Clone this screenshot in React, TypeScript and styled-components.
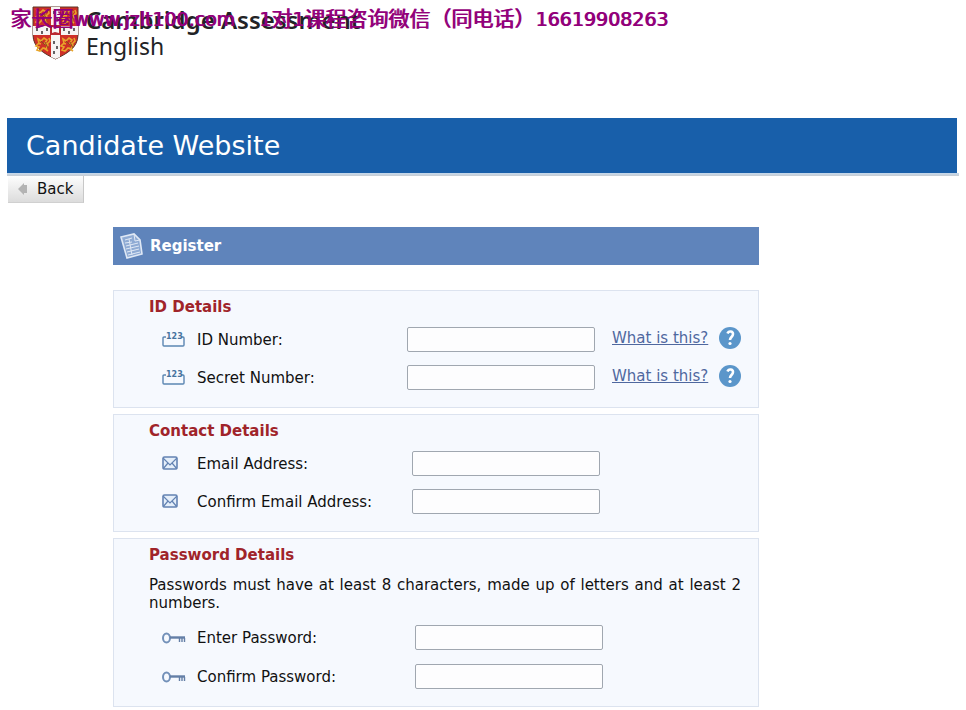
import React, { useId } from "react";
import styled, { createGlobalStyle } from "styled-components";

const GlobalStyle = createGlobalStyle`
  * { box-sizing: border-box; }
  body {
    margin: 0;
    background: #fff;
    color: #111;
    font: 15px/18px "DejaVu Sans", Verdana, sans-serif;
  }
`;

const Page = styled.div`
  padding: 0 7px 3px 7px;
`;

const Masthead = styled.header`
  position: relative;
  display: flex;
  align-items: flex-start;
  gap: 7px;
  height: 118px;
  padding: 6px 0 0 25px;
`;

const Brand = styled.div`
  color: #222326;
  font-family: "Noto Sans", "Open Sans", sans-serif;
  font-size: 23px;
  line-height: 27px;
`;

const BrandName = styled.div`
  font-size: 24px;
  font-weight: 600;
`;

const Watermark = styled.p`
  position: absolute;
  top: 6px;
  left: 3px;
  margin: 0;
  color: #92007a;
  font: 19px/22px "DejaVu Sans", sans-serif;
  text-shadow: 1px 0 #92007a;
  white-space: pre;
`;

const Chinese = styled.span`
  font: 400 21px/22px "Noto Sans CJK SC", sans-serif;
`;

const Banner = styled.h1`
  margin: 0 2px 0 0;
  padding: 0 19px;
  background: #185faa;
  color: #fff;
  font-size: 27px;
  font-weight: 400;
  line-height: 55px;
`;

const Rule = styled.div`
  height: 3px;
  background: linear-gradient(#c5d9ed, #c8cdd3);
`;

const BackButton = styled.button`
  display: flex;
  align-items: center;
  gap: 10px;
  height: 27px;
  margin-left: 1px;
  padding: 0 10px;
  border: 0;
  border-right: 1px solid #c8c8c8;
  border-bottom: 1px solid #d0d0d0;
  background: linear-gradient(#fdfdfd, #dcdcdc);
  color: #111;
  font: inherit;
`;

const Main = styled.main`
  max-width: 646px;
  margin: 24px 106px 0;
`;

const TitleBar = styled.h2`
  display: flex;
  align-items: center;
  gap: 7px;
  height: 38px;
  margin: 0 0 25px;
  padding: 0 7px;
  background: #5f84bb;
  color: #fff;
  font-size: 15px;
`;

const Form = styled.form`
  display: flex;
  flex-direction: column;
  gap: 6px;
`;

const Panel = styled.section`
  padding: 7px 17px 17px 35px;
  border: 1px solid #dce3ef;
  background: #f6f9fe;
`;

const Heading = styled.h3`
  margin: 0 0 11px;
  color: #a0242a;
  font-size: 15px;
`;

const Note = styled.p`
  margin: 12px 0 13px;
  text-align: justify;
`;

const Rows = styled.div<{ $gap?: number }>`
  display: grid;
  gap: ${(p) => p.$gap ?? 13}px;
`;

const Row = styled.div<{ $label: number }>`
  display: grid;
  grid-template-columns: 35px ${(p) => p.$label}px 188px auto;
  align-items: center;
  height: 25px;
  padding-left: 13px;
`;

const TextBox = styled.input`
  width: 100%;
  height: 25px;
  padding: 0 4px;
  border: 1px solid #a0a7b0;
  border-radius: 2px;
  background: #fdfdfe;
  font: inherit;
`;

const Help = styled.div`
  display: flex;
  align-items: center;
  justify-content: space-between;
  padding: 0 0 3px 17px;
`;

const HelpLink = styled.a`
  color: #4f689f;
`;

const HelpButton = styled.button`
  display: block;
  width: 22px;
  height: 22px;
  padding: 0;
  border: 0;
  background: none;
`;

const Lion = ({ x, y }: { x: number; y: number }) => (
  <g transform={`translate(${x} ${y})`} fill="none" stroke="#e8a52b" strokeWidth="1.6">
    <path d="M2 2l3 2 3-3 3 2-2 3 3 2-2 4-3-1-3 3-3-1 2-3-3-1 3-3zM11 7l3-3-1-3M8 11l4 3M2 6l3 1" />
    <path d="M5 4l4 4M9 5l3 6" stroke="#86501c" strokeWidth="1" />
  </g>
);

const Shield = () => (
  <svg width="47" height="54" viewBox="0 0 47 54" aria-hidden="true">
    <path d="M1 1h45v28c0 13-12 19-22.500 24C13 48 1 42 1 29z" fill="#cf2f27" stroke="#5d3526" />
    <path d="M19 1h9v19h18v9H28v22l-4.500 2-4.500-2V29H1v-9h18z" fill="#f7f4f3" />
    <path d="M5 22v3M10 25v3M15 22v3M32 22v3M37 25v3M42 22v3M22 5v3M25 11v3M22 35v3M25 40v3M22 45v3" stroke="#292326" strokeWidth="1.4" />
    <path d="M18 19h11v10H18z" fill="#ba2730" />
    <path d="M20 21l3 1 4-1v6l-4-1-3 1z" fill="#f7f4f3" />
    <Lion x={3} y={3} />
    <Lion x={30} y={3} />
    <Lion x={4} y={31} />
    <Lion x={29} y={31} />
  </svg>
);

const Arrow = () => (
  <svg width="9" height="12" viewBox="0 0 9 12" aria-hidden="true">
    <path d="M0 6l6-6v2h3v8H6v2z" fill="#b3b3b3" />
  </svg>
);

const Document = () => (
  <svg width="23" height="26" viewBox="0 0 23 26" aria-hidden="true">
    <path d="M1 4L14 1l6 6 2 14-15 4z" fill="#8fabd4" stroke="#dfe8f5" strokeWidth="1.6" />
    <path d="M14 1l1 7 5-1M5 7l7-2M5 10l7-1M6 13l12-3M6 16l13-3M7 19l12-3M8 22l12-3M9 6l3 16" fill="none" stroke="#dfe8f5" />
  </svg>
);

const NumberIcon = () => (
  <svg width="23" height="16" viewBox="0 0 23 16" aria-hidden="true">
    <path d="M4 5H2q-1 0-1 1v7q0 1 1 1h19q1 0 1-1V6q0-1-1-1h-2" fill="none" stroke="#5b86b2" strokeWidth="1.4" />
    <text x="4" y="7" fill="#46749f" fontFamily="DejaVu Sans" fontSize="8" fontWeight="700">123</text>
  </svg>
);

const MailIcon = () => (
  <svg width="16" height="15" viewBox="0 0 16 15" aria-hidden="true">
    <rect x="1" y="1" width="14" height="12" rx="1.500" fill="#e5effa" stroke="#6383b3" strokeWidth="1.6" />
    <path d="M1 2l7 7 7-7M1 13l5-6M15 13l-5-6" fill="none" stroke="#6383b3" strokeWidth="1.200" />
  </svg>
);

const KeyIcon = () => (
  <svg width="24" height="12" viewBox="0 0 24 12" aria-hidden="true">
    <ellipse cx="4.500" cy="6" rx="3.500" ry="4.500" fill="none" stroke="#7391b9" strokeWidth="2" />
    <path d="M8 5.500h15" stroke="#647fa6" strokeWidth="2.400" />
    <path d="M17.500 6v4M20 6v4M22.500 6v4" stroke="#647fa6" strokeWidth="1.400" />
  </svg>
);

const HelpIcon = () => (
  <svg width="22" height="22" viewBox="0 0 22 22" aria-hidden="true">
    <circle cx="11" cy="11" r="11" fill="#5b96ca" />
    <path d="M8.500 6.500c1-3 5.500-2.500 5.500.5 0 3-3 3-3 6" fill="none" stroke="#fff" strokeWidth="2.600" />
    <circle cx="11" cy="16.500" r="1.600" fill="#fff" />
  </svg>
);

type FieldProps = {
  icon: React.ReactNode;
  label: string;
  labelWidth: number;
  type?: string;
  help?: boolean;
};

const Field = ({ icon, label, labelWidth, type = "text", help }: FieldProps) => {
  const id = useId();
  return (
    <Row $label={labelWidth}>
      {icon}
      <label htmlFor={id}>{label}</label>
      <TextBox id={id} type={type} />
      {help && (
        <Help>
          <HelpLink href="#help">What is this?</HelpLink>
          <HelpButton type="button" aria-label={`Help: ${label}`}>
            <HelpIcon />
          </HelpButton>
        </Help>
      )}
    </Row>
  );
};

export default function App() {
  return (
    <>
      <GlobalStyle />
      <Page>
        <Masthead>
          <Shield />
          <Brand>
            <BrandName>Cambridge Assessment</BrandName>
            English
          </Brand>
          <Watermark>
            <Chinese>家长圈</Chinese>
            {"www.jzlt100.com    1"}
            <Chinese>对</Chinese>1<Chinese>课程咨询微信（同电话）</Chinese>
            16619908263
          </Watermark>
        </Masthead>
        <Banner>Candidate Website</Banner>
        <Rule />
        <BackButton type="button">
          <Arrow />
          Back
        </BackButton>
        <Main>
          <TitleBar>
            <Document />
            Register
          </TitleBar>
          <Form>
            <Panel>
              <Heading>ID Details</Heading>
              <Rows>
                <Field icon={<NumberIcon />} label="ID Number:" labelWidth={210} help />
                <Field icon={<NumberIcon />} label="Secret Number:" labelWidth={210} help />
              </Rows>
            </Panel>
            <Panel>
              <Heading>Contact Details</Heading>
              <Rows>
                <Field icon={<MailIcon />} label="Email Address:" labelWidth={215} type="email" />
                <Field icon={<MailIcon />} label="Confirm Email Address:" labelWidth={215} type="email" />
              </Rows>
            </Panel>
            <Panel>
              <Heading>Password Details</Heading>
              <Note>Passwords must have at least 8 characters, made up of letters and at least 2 numbers.</Note>
              <Rows $gap={14}>
                <Field icon={<KeyIcon />} label="Enter Password:" labelWidth={218} type="password" />
                <Field icon={<KeyIcon />} label="Confirm Password:" labelWidth={218} type="password" />
              </Rows>
            </Panel>
          </Form>
        </Main>
      </Page>
    </>
  );
}
